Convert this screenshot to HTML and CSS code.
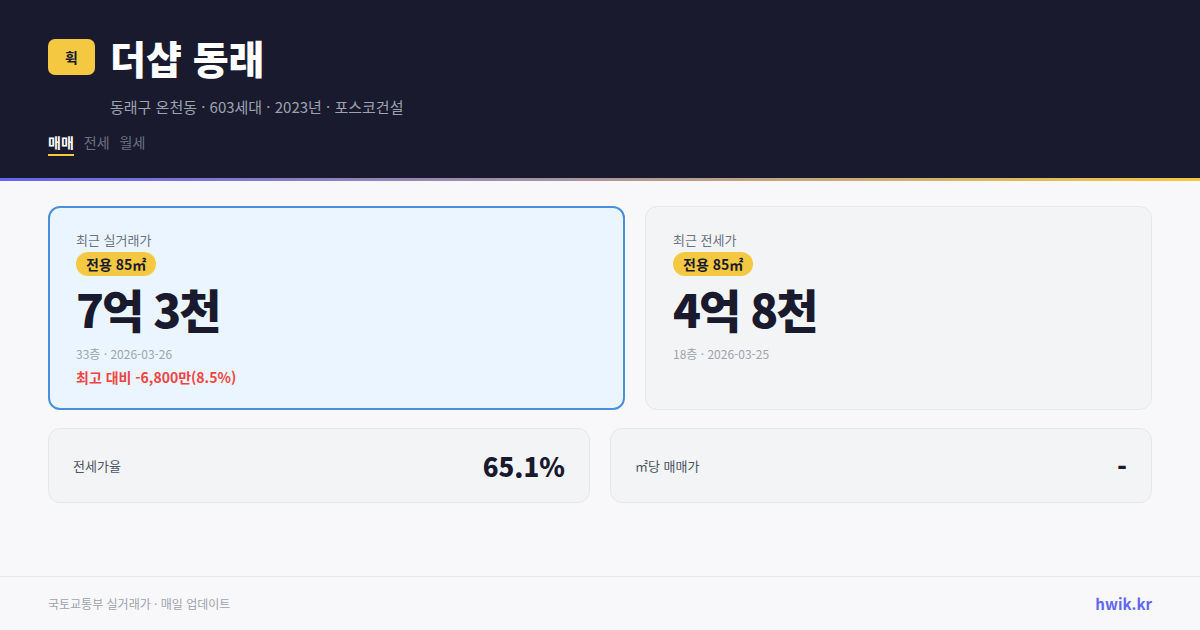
FILE: index.html
```html
<!DOCTYPE html>
<html lang="ko">
<head>
<meta charset="utf-8">
<title>더샵 동래</title>
<link rel="stylesheet" href="styles.css">
</head>
<body>
<header class="hero">
  <div class="title-row">
    <div class="logo">휙</div>
    <h1 class="title">더샵 동래</h1>
  </div>
  <div class="subtitle">동래구 온천동 · 603세대 · 2023년 · 포스코건설</div>
  <nav class="tabs">
    <span class="tab active">매매</span>
    <span class="tab">전세</span>
    <span class="tab">월세</span>
  </nav>
</header>
<div class="accent"></div>
<main class="main">
  <section class="cards">
    <div class="card card-primary">
      <div class="card-label">최근 실거래가</div>
      <span class="chip">전용 85㎡</span>
      <div class="price">7억 3천</div>
      <div class="meta">33층 · 2026-03-26</div>
      <div class="diff">최고 대비 -6,800만(8.5%)</div>
    </div>
    <div class="card">
      <div class="card-label">최근 전세가</div>
      <span class="chip">전용 85㎡</span>
      <div class="price">4억 8천</div>
      <div class="meta">18층 · 2026-03-25</div>
    </div>
  </section>
  <section class="stats">
    <div class="stat">
      <span class="stat-label">전세가율</span>
      <span class="stat-value">65.1%</span>
    </div>
    <div class="stat">
      <span class="stat-label">㎡당 매매가</span>
      <span class="stat-value">-</span>
    </div>
  </section>
</main>
<footer class="footer">
  <span class="source">국토교통부 실거래가 · 매일 업데이트</span>
  <span class="brand">hwik.kr</span>
</footer>
</body>
</html>
```
FILE: styles.css
```css
* { box-sizing: border-box; margin: 0; padding: 0; }
html, body { width: 1200px; height: 630px; overflow: hidden; }
body {
  font-family: "Noto Sans CJK KR", "Noto Sans", sans-serif;
  background: #f8f8fa;
  color: #1a1a2e;
  display: flex;
  flex-direction: column;
}
.hero {
  background: #1a1a2e;
  height: 178px;
  padding: 36px 48px 0;
}
.title-row { display: flex; align-items: center; gap: 15px; height: 42px; }
.logo {
  width: 47px; height: 36px;
  background: #f5c842;
  border-radius: 7px;
  display: flex; align-items: center; justify-content: center;
  font-weight: 700; font-size: 14px; color: #1a1a2e;
}
.title { color: #fff; font-size: 39px; font-weight: 900; line-height: 42px; letter-spacing: 0; }
.subtitle {
  margin: 18px 0 0 62px;
  color: #9ca3af;
  font-size: 15px;
  line-height: 22px;
}
.tabs { display: flex; gap: 10px; margin-top: 14px; }
.tab { font-size: 14px; line-height: 20px; color: #6b7280; padding-bottom: 2px; }
.tab.active { color: #fff; font-weight: 700; border-bottom: 2px solid #f5c842; }
.accent { height: 3px; background: linear-gradient(90deg, #6366f1, #f5c842); }
.main { padding: 25px 48px 0; flex: 1; }
.cards { display: grid; grid-template-columns: 577px 1fr; gap: 20px; }
.card {
  height: 204px;
  background: #f3f4f6;
  border: 1px solid #e5e7eb;
  border-radius: 12px;
  padding: 23px 27px;
}
.card-primary { background: #ebf5ff; border: 2px solid #4a90d9; padding: 22px 26px; }
.card-label { font-size: 13px; color: #6b7280; line-height: 20px; }
.chip {
  display: inline-block;
  margin-top: 2px;
  background: #f5c842;
  color: #1a1a2e;
  font-size: 14px;
  font-weight: 700;
  line-height: 24px;
  padding: 0 10px;
  border-radius: 12px;
}
.price { font-size: 46px; font-weight: 900; line-height: 60px; letter-spacing: -2px; margin-top: 2px; }
.meta { font-size: 12px; color: #9ca3af; line-height: 18px; margin-top: 7px; }
.diff { font-size: 14px; color: #ef4444; font-weight: 700; line-height: 22px; margin-top: 3px; }
.stats { display: grid; grid-template-columns: 1fr 1fr; gap: 20px; margin-top: 18px; }
.stat {
  height: 75px;
  background: #f3f4f6;
  border: 1px solid #e5e7eb;
  border-radius: 12px;
  padding: 0 24px;
  display: flex; align-items: center; justify-content: space-between;
}
.stat-label { font-size: 13px; color: #4b5563; }
.stat-value { font-size: 26px; font-weight: 800; color: #1a1a2e; }
.footer {
  height: 54px;
  border-top: 1px solid #e5e7eb;
  padding: 0 48px;
  display: flex; align-items: center; justify-content: space-between;
}
.source { font-size: 12px; color: #9ca3af; }
.brand { font-size: 15px; font-weight: 700; color: #6366f1; }
```
